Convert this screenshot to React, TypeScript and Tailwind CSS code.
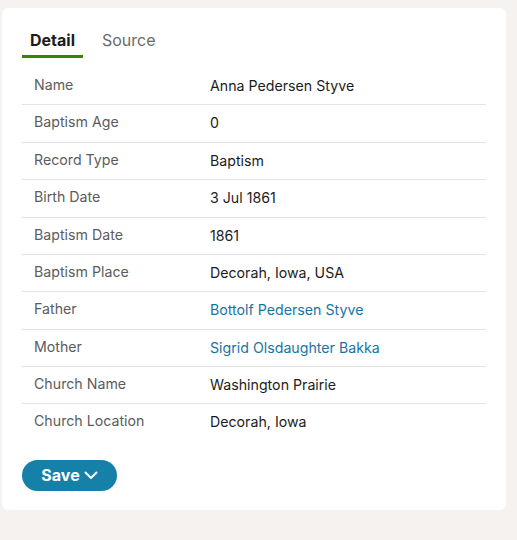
import React from "react";

const rows: { label: string; value: string; link?: boolean }[] = [
  { label: "Name", value: "Anna Pedersen Styve" },
  { label: "Baptism Age", value: "0" },
  { label: "Record Type", value: "Baptism" },
  { label: "Birth Date", value: "3 Jul 1861" },
  { label: "Baptism Date", value: "1861" },
  { label: "Baptism Place", value: "Decorah, Iowa, USA" },
  { label: "Father", value: "Bottolf Pedersen Styve", link: true },
  { label: "Mother", value: "Sigrid Olsdaughter Bakka", link: true },
  { label: "Church Name", value: "Washington Prairie" },
  { label: "Church Location", value: "Decorah, Iowa" },
];

export default function App() {
  return (
    <div
      className="w-[517px] h-[540px] bg-[#f5f2ef] pt-[8px] pl-[2px]"
      style={{ fontFamily: "Inter, 'Liberation Sans', sans-serif" }}
    >
      <div className="w-[504px] h-[502px] bg-white rounded-[6px] px-5 pt-[16px]">
        <div className="flex gap-[4px]">
          <div className="px-2 h-[34px] flex items-center border-b-[3px] border-[#3a8500] text-[16px] font-bold text-[#1b1b1b]">
            Detail
          </div>
          <div className="px-[15px] h-[34px] flex items-center border-b-[3px] border-transparent text-[16px] text-[#6b6b6b]">
            Source
          </div>
        </div>
        <div className="mt-[10px] w-[464px]">
          {rows.map((r, i) => (
            <div
              key={r.label}
              className={`grid grid-cols-[188px_1fr] py-[8px] leading-[20.375px] text-[14.2px] ${
                i < rows.length - 1 ? "border-b border-[#e3e3e3]" : ""
              }`}
            >
              <div className="pl-3 text-[#5c5c5c] -translate-y-[1px]">{r.label}</div>
              <div className={r.link ? "text-[#1675a3]" : "text-[#1c1c1c]"}>{r.value}</div>
            </div>
          ))}
        </div>
        <button className="mt-[19px] h-[31px] w-[95px] rounded-full bg-[#1681a8] text-white font-bold text-[16px] flex items-center justify-center gap-[4px]">
          <span>Save</span>
          <svg width="14" height="10" viewBox="0 0 14 10" fill="none" stroke="white" strokeWidth="2" strokeLinecap="round" strokeLinejoin="round">
            <path d="M1.5 2.5l5.5 5.5 5.5-5.5" />
          </svg>
        </button>
      </div>
    </div>
  );
}
